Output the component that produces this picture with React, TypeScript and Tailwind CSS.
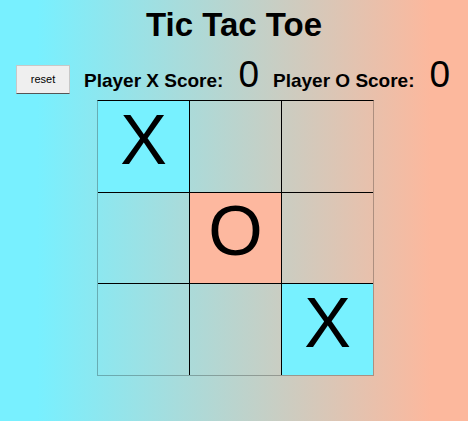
import { useState } from "react";

type Cell = "X" | "O" | null;

const initialBoard: Cell[] = ["X", null, null, null, "O", null, null, null, "X"];

export default function App() {
  const [board, setBoard] = useState<Cell[]>(initialBoard);
  const [scoreX] = useState(0);
  const [scoreO] = useState(0);

  const cellBorder = (i: number) => {
    const col = i % 3;
    const row = Math.floor(i / 3);
    return [
      col < 2 ? "border-r border-r-black" : "",
      row < 2 ? "border-b border-b-black" : "",
    ].join(" ");
  };

  return (
    <div
      className="w-full h-[421px] bg-[linear-gradient(to_right,#78f0ff_8%,#fcb89d_92%)] font-['Liberation_Sans',Arial,sans-serif] text-black"
    >
      <h1 className="text-[33px] font-bold text-center leading-[37px] pt-[6px]">Tic Tac Toe</h1>

      <div className="flex items-center mt-[12px] pl-[16px] h-[40px]">
        <button
          onClick={() => setBoard(Array(9).fill(null))}
          className="w-[54px] h-[29px] bg-[#efefef] border border-[#c8c8c8] border-b-[#555] text-[11px] mt-[8px]"
        >
          reset
        </button>
        <div className="flex items-baseline ml-[14px] mt-[2px]">
          <span className="text-[19px] font-bold">Player X Score:</span>
          <span className="text-[37px] ml-[15px] leading-none">{scoreX}</span>
        </div>
        <div className="flex items-baseline ml-[14px] mt-[2px]">
          <span className="text-[19px] font-bold">Player O Score:</span>
          <span className="text-[37px] ml-[15px] leading-none">{scoreO}</span>
        </div>
      </div>

      <div className="flex justify-center mt-[5px]">
        <div className="grid grid-cols-[92px_92px_91px] grid-rows-[92px_91px_91px] border-t border-t-black border-x border-b border-x-black/25 border-b-black/25 ml-[3px]">
          {board.map((c, i) => (
            <div
              key={i}
              className={`flex items-center justify-center text-[70px] leading-none pb-[14px] ${cellBorder(i)} ${
                c === "X" ? "bg-[#77f1ff]" : c === "O" ? "bg-[#fdb89f]" : ""
              }`}
            >
              {c}
            </div>
          ))}
        </div>
      </div>
    </div>
  );
}
